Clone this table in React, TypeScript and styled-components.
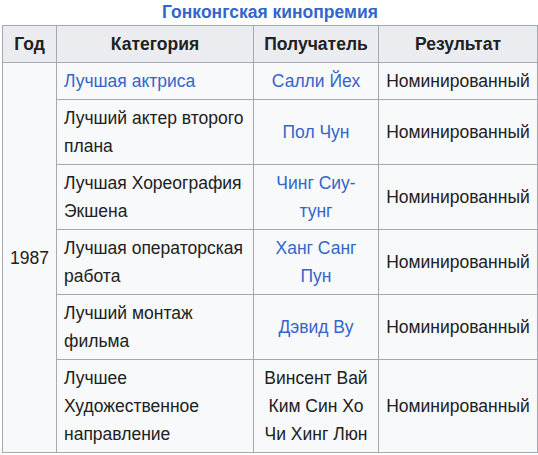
import React from "react";
import styled, { createGlobalStyle } from "styled-components";

const Global = createGlobalStyle`
  html, body { margin: 0; padding: 0; background: #ffffff; }
  body { font-family: "Liberation Sans", Arial, sans-serif; color: #202122; }
`;

const Wrap = styled.div`
  padding: 0 1px 0 2px;
`;

const Table = styled.table`
  border-collapse: collapse;
  width: 535px;
  table-layout: fixed;
  background: #f8f9fa;
  border: 1px solid #a2a9b1;
  font-size: 17.5px;
  line-height: 28px;
`;

const Caption = styled.caption`
  font-weight: bold;
  color: #3366cc;
  font-size: 17.5px;
  line-height: 22px;
  padding: 1px 0 2px;
  text-align: center;
`;

const Th = styled.th`
  background: #eaecf0;
  border: 1px solid #a2a9b1;
  padding: 4px 7px;
  text-align: center;
  font-weight: bold;
`;

const Td = styled.td<{ $align?: "left" | "center" }>`
  border: 1px solid #a2a9b1;
  padding: 4px 7px;
  text-align: ${(p) => p.$align ?? "left"};
  vertical-align: middle;
`;

const Link = styled.span`
  color: #3366cc;
`;

type Row = { cat: string; catLink?: boolean; rec: string[]; recLink: boolean };

const rows: Row[] = [
  { cat: "Лучшая актриса", catLink: true, rec: ["Салли Йех"], recLink: true },
  { cat: "Лучший актер второго плана", rec: ["Пол Чун"], recLink: true },
  { cat: "Лучшая Хореография Экшена", rec: ["Чинг Сиу-тунг"], recLink: true },
  { cat: "Лучшая операторская работа", rec: ["Ханг Санг Пун"], recLink: true },
  { cat: "Лучший монтаж фильма", rec: ["Дэвид Ву"], recLink: true },
  {
    cat: "Лучшее Художественное направление",
    rec: ["Винсент Вай", "Ким Син Хо", "Чи Хинг Люн"],
    recLink: false,
  },
];

export default function App() {
  return (
    <>
      <Global />
      <Wrap>
        <Table>
          <Caption>Гонконгская кинопремия</Caption>
          <colgroup>
            <col style={{ width: 54 }} />
            <col style={{ width: 197 }} />
            <col style={{ width: 125 }} />
            <col style={{ width: 159 }} />
          </colgroup>
          <thead>
            <tr>
              <Th>Год</Th>
              <Th>Категория</Th>
              <Th>Получатель</Th>
              <Th>Результат</Th>
            </tr>
          </thead>
          <tbody>
            {rows.map((r, i) => (
              <tr key={i}>
                {i === 0 && (
                  <Td $align="center" rowSpan={rows.length}>
                    1987
                  </Td>
                )}
                <Td>{r.catLink ? <Link>{r.cat}</Link> : r.cat}</Td>
                <Td $align="center">
                  {r.rec.map((n, j) => (
                    <React.Fragment key={j}>
                      {j > 0 && <br />}
                      {r.recLink ? <Link>{n}</Link> : n}
                    </React.Fragment>
                  ))}
                </Td>
                <Td $align="center">Номинированный</Td>
              </tr>
            ))}
          </tbody>
        </Table>
      </Wrap>
    </>
  );
}
